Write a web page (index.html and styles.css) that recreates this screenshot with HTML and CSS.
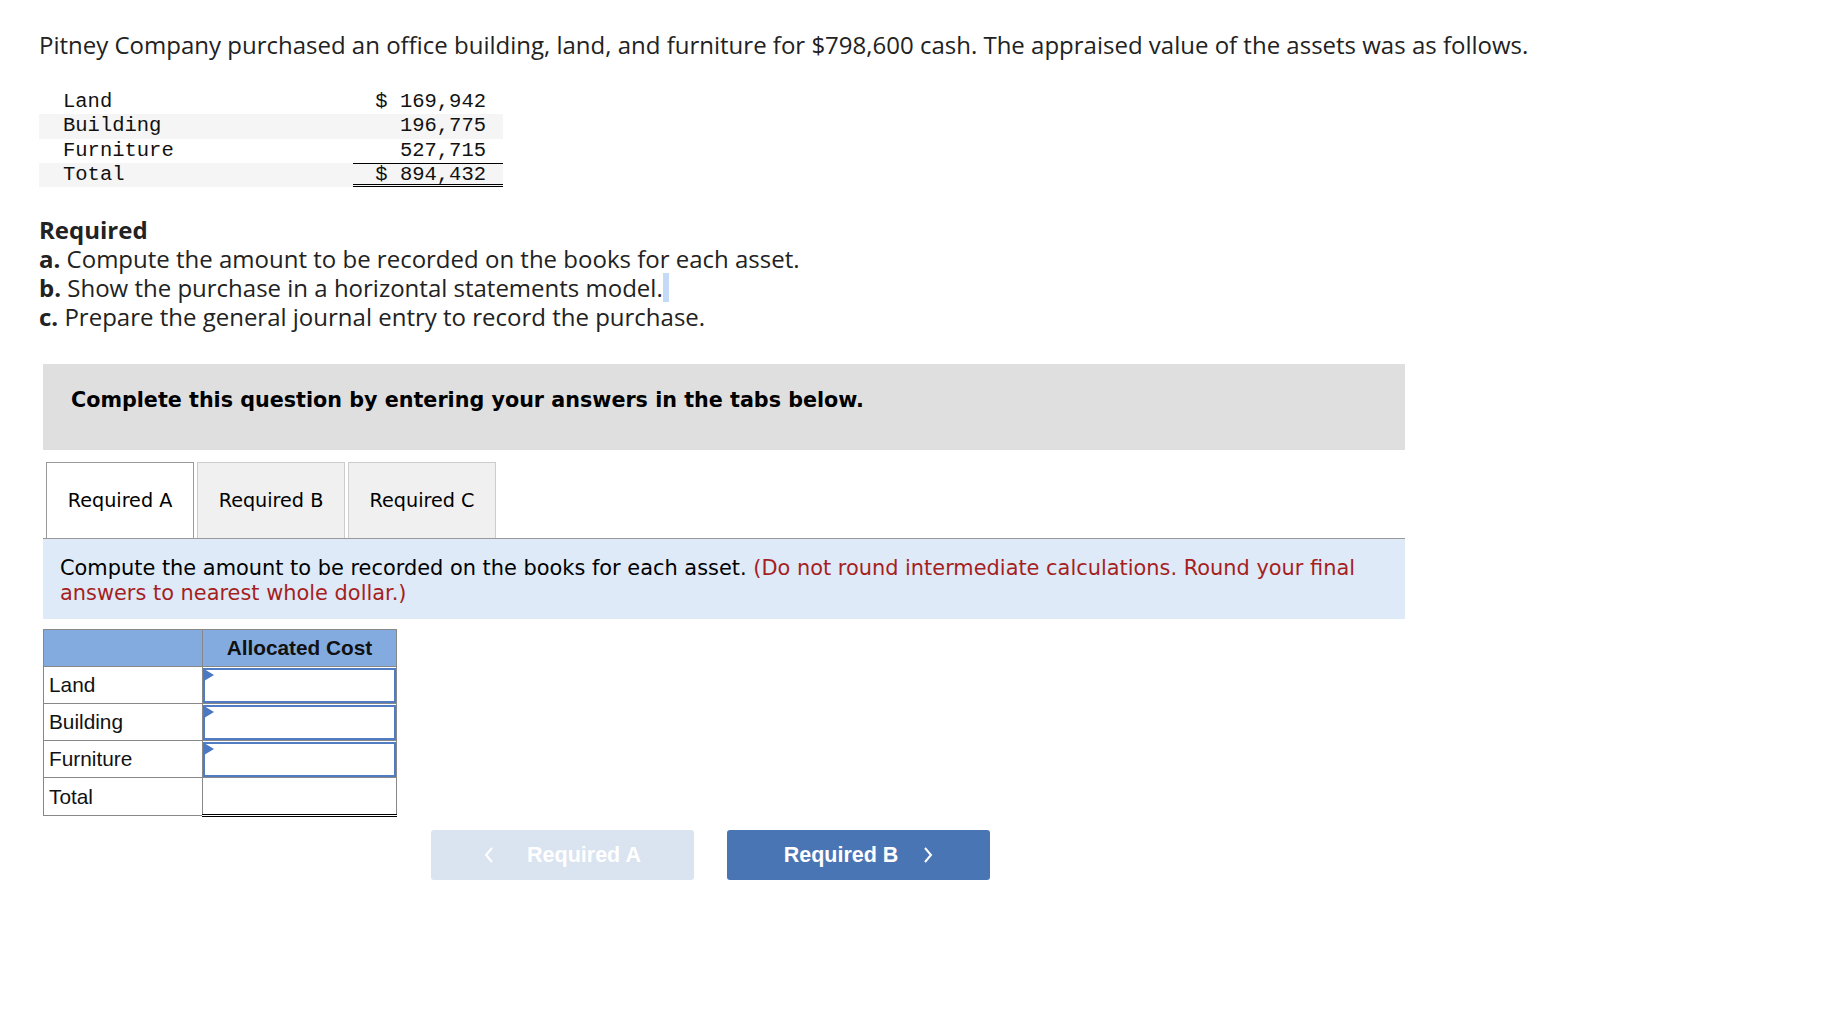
FILE: index.html
```html
<!DOCTYPE html>
<html lang="en">
<head>
<meta charset="utf-8">
<title>Pitney Company</title>
<link rel="stylesheet" href="styles.css">
</head>
<body>
<div class="page">
  <p class="intro">Pitney Company purchased an office building, land, and furniture for $798,600 cash. The appraised value of the assets was as follows.</p>

  <div class="appraisal">
    <div class="ap-row"><span class="ap-label">Land</span><span class="ap-val">$ 169,942</span></div>
    <div class="ap-row shaded"><span class="ap-label">Building</span><span class="ap-val">196,775</span></div>
    <div class="ap-row"><span class="ap-label">Furniture</span><span class="ap-val">527,715</span></div>
    <div class="ap-row shaded"><span class="ap-label">Total</span><span class="ap-val ap-total">$ 894,432</span></div>
  </div>

  <div class="required">
    <div class="req-title">Required</div>
    <div><b>a.</b> Compute the amount to be recorded on the books for each asset.</div>
    <div><b>b.</b> Show the purchase in a horizontal statements model.<span class="sel"></span></div>
    <div><b>c.</b> Prepare the general journal entry to record the purchase.</div>
  </div>

  <div class="question">
    <div class="banner">Complete this question by entering your answers in the tabs below.</div>

    <div class="tabs">
      <div class="tab active">Required A</div>
      <div class="tab">Required B</div>
      <div class="tab">Required C</div>
    </div>

    <div class="instructions">Compute the amount to be recorded on the books for each asset. <span class="note">(Do not round intermediate calculations. Round your final answers to nearest whole dollar.)</span></div>

    <table class="answer">
      <thead>
        <tr><th class="col-label"></th><th class="col-value">Allocated Cost</th></tr>
      </thead>
      <tbody>
        <tr><td class="col-label">Land</td><td class="col-value"><div class="input"></div></td></tr>
        <tr><td class="col-label">Building</td><td class="col-value"><div class="input"></div></td></tr>
        <tr><td class="col-label">Furniture</td><td class="col-value"><div class="input"></div></td></tr>
        <tr class="total-row"><td class="col-label">Total</td><td class="col-value total-cell"></td></tr>
      </tbody>
    </table>

    <div class="nav">
      <button class="btn btn-prev" type="button">
        <svg class="chev" width="10" height="16" viewBox="0 0 10 16"><polyline points="8,1 2,8 8,15" fill="none" stroke="currentColor" stroke-width="2"/></svg>
        <span>Required A</span>
      </button>
      <button class="btn btn-next" type="button">
        <span>Required B</span>
        <svg class="chev" width="10" height="16" viewBox="0 0 10 16"><polyline points="2,1 8,8 2,15" fill="none" stroke="currentColor" stroke-width="2"/></svg>
      </button>
    </div>
  </div>
</div>
</body>
</html>
```

FILE: styles.css
```css
html, body {
  margin: 0;
  padding: 0;
  background: #ffffff;
}

.page {
  padding: 30px 0 0 39px;
  color: #222222;
  font-family: "Open Sans", "Lato", sans-serif;
}

.intro {
  margin: 0;
  font-size: 24px;
  line-height: 29px;
}

.appraisal {
  margin-top: 31px;
  width: 464px;
  font-family: "Liberation Mono", monospace;
  font-size: 20.5px;
  color: #111111;
}

.ap-row {
  display: flex;
  height: 24.3px;
  line-height: 24.3px;
}

.ap-row.shaded {
  background: #f5f5f5;
}

.ap-label {
  width: 290px;
  padding-left: 24px;
}

.ap-val {
  width: 133px;
  padding-right: 17px;
  text-align: right;
  white-space: pre;
}

.ap-total {
  border-top: 1px solid #000000;
  border-bottom: 3px double #000000;
  line-height: 22px;
}

.required {
  margin-top: 28px;
  font-size: 24px;
  line-height: 29px;
}

.req-title {
  font-weight: 700;
}

.required b {
  font-weight: 700;
}

.sel {
  display: inline-block;
  width: 6px;
  height: 29px;
  background: #c4dbf8;
  vertical-align: top;
}

.question {
  margin: 33px 0 0 4px;
  width: 1362px;
  font-family: "DejaVu Sans", Verdana, sans-serif;
}

.banner {
  height: 86px;
  box-sizing: border-box;
  padding: 24px 0 0 28px;
  background: #dfdfdf;
  color: #000000;
  font-weight: 700;
  font-size: 20.7px;
  line-height: 25px;
}

.tabs {
  display: flex;
  gap: 3px;
  margin-top: 12px;
  padding-left: 3px;
  border-bottom: 1px solid #999999;
}

.tab {
  width: 146px;
  height: 74px;
  display: flex;
  align-items: center;
  justify-content: center;
  background: #f0f0f0;
  border: 1px solid #cccccc;
  border-bottom: none;
  color: #000000;
  font-size: 19.2px;
  padding-bottom: 1px;
  box-sizing: content-box;
}

.tab.active {
  background: #ffffff;
  border-color: #999999;
}

.instructions {
  background: #deeaf7;
  padding: 17px 17px 13px 17px;
  font-size: 20.9px;
  line-height: 25px;
  color: #000000;
}

.note {
  color: #a51f1f;
}

.answer {
  margin-top: 10px;
  border-collapse: collapse;
  font-family: "Liberation Sans", Arial, sans-serif;
  font-size: 20.8px;
  color: #111111;
}

.answer th,
.answer td {
  border: 1px solid #888888;
  height: 36px;
  padding: 0;
}

.answer th {
  background: #84abe0;
  font-weight: 700;
  text-align: center;
}

.answer .col-label {
  width: 159px;
  padding-left: 5px;
  text-align: left;
  box-sizing: border-box;
}

.answer th.col-value {
  text-align: center;
}

.answer .col-value {
  width: 193px;
}

.input {
  position: relative;
  height: 31px;
  margin: 0;
  border: 2px solid #4f7cc2;
  background: #ffffff;
}

.input::before {
  content: "";
  position: absolute;
  left: -1px;
  top: -1px;
  border-top: 6px solid transparent;
  border-bottom: 6px solid transparent;
  border-left: 10px solid #4a78c2;
}

.total-row .total-cell {
  border-top: 1px solid #000000;
  border-bottom: 3px double #000000;
}

.nav {
  display: flex;
  gap: 33px;
  margin: 13px 0 0 388px;
}

.btn {
  width: 263px;
  height: 50px;
  display: flex;
  align-items: center;
  justify-content: center;
  gap: 33px;
  border: none;
  border-radius: 3px;
  color: #ffffff;
  font-family: "Liberation Sans", Arial, sans-serif;
  font-weight: 700;
  font-size: 21.5px;
  padding: 0;
}

.btn-prev {
  background: #dae3f0;
}

.btn-next {
  background: #4a75b5;
  gap: 25px;
}

.chev {
  display: block;
}
```
